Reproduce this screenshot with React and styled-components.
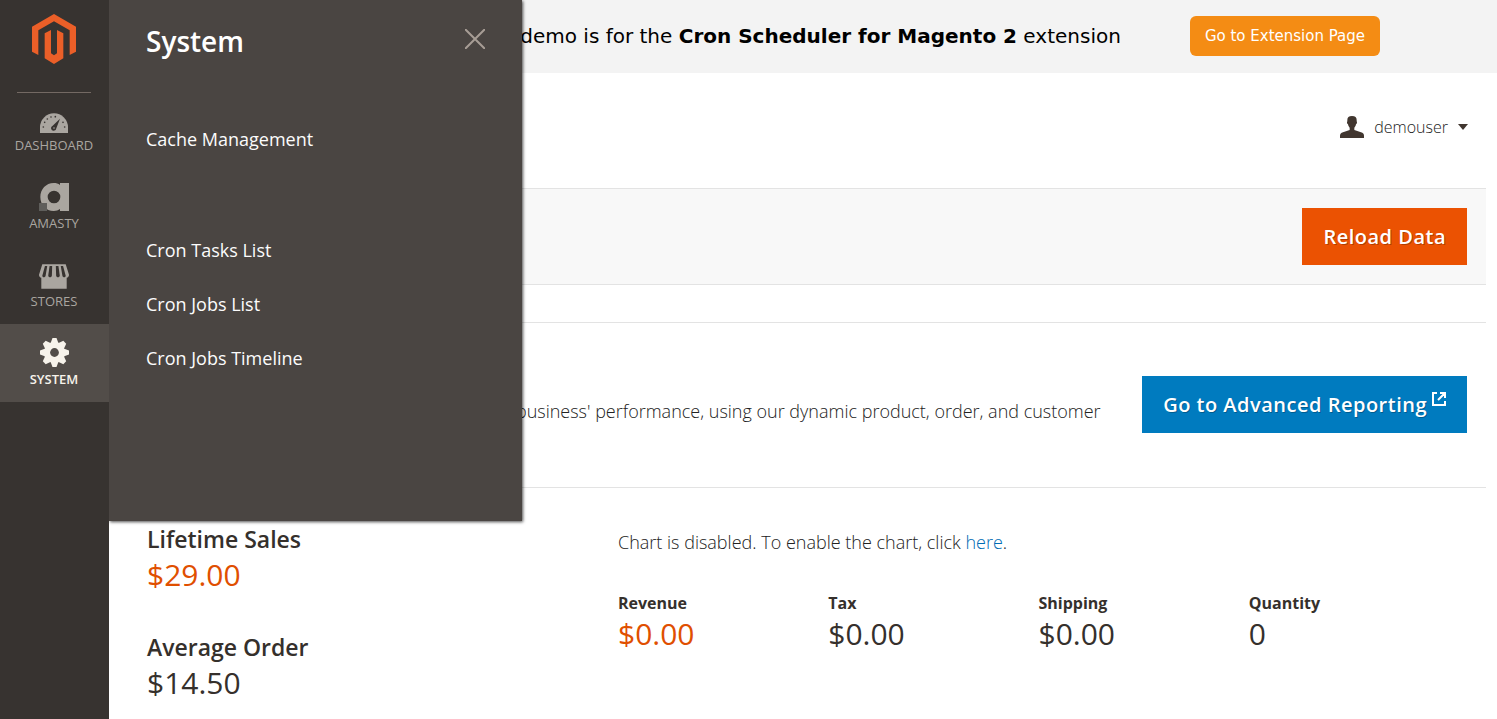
import React from 'react';
import styled, { createGlobalStyle } from 'styled-components';

const navItems = [
  { label: 'Dashboard', icon: <DashboardIcon /> },
  { label: 'Amasty', icon: <AmastyIcon /> },
  { label: 'Stores', icon: <StoresIcon /> },
  { label: 'System', icon: <SystemIcon />, active: true },
];

const menuGroups = [
  ['Cache Management'],
  ['Cron Tasks List', 'Cron Jobs List', 'Cron Jobs Timeline'],
];

const sales = [
  { label: 'Lifetime Sales', value: '$29.00', highlight: true },
  { label: 'Average Order', value: '$14.50' },
];

const totals = [
  { label: 'Revenue', value: '$0.00', highlight: true },
  { label: 'Tax', value: '$0.00' },
  { label: 'Shipping', value: '$0.00' },
  { label: 'Quantity', value: '0' },
];

function MagentoLogo() {
  return (
    <svg width="44" height="50" viewBox="96 40 132 150" fill="#eb5f28" aria-hidden="true">
      <path d="M162 40 228 78V153L209 163V89L162 62 115 89V163L96 153V78Z" />
      <path d="M134 98 153 88V158L162 164 171 158V88L190 98V173L162 190 134 173Z" />
    </svg>
  );
}

function DashboardIcon() {
  return (
    <svg width="28" height="20" viewBox="120 38 84 60" aria-hidden="true">
      <path fill="currentColor" d="M120 98V81a42 42 0 0 1 84 0v17Z" />
      <g fill="#373330">
        <path d="M180 55 169 84a8 8 0 1 1-11-8Z" />
        <circle cx="130" cy="80" r="2.5" />
        <circle cx="134" cy="66" r="2.5" />
        <circle cx="142" cy="56" r="2.5" />
        <circle cx="153" cy="50" r="2.5" />
        <circle cx="166" cy="49" r="2.5" />
        <circle cx="189" cy="66" r="2.5" />
        <circle cx="194" cy="80" r="2.5" />
      </g>
      <circle cx="162" cy="83" r="2.5" fill="currentColor" />
    </svg>
  );
}

function AmastyIcon() {
  return (
    <svg width="30" height="28" viewBox="117 252 90 84" aria-hidden="true">
      <path
        fill="currentColor"
        fillRule="evenodd"
        d="M161 252c8 0 14 2 19 6v-6h27v84h-27v-6c-5 4-11 6-19 6-23 0-40-19-40-42s17-42 40-42Zm1 23a19 19 0 1 0 0 38 19 19 0 0 0 0-38Z"
      />
      <path fill="#5f5e5b" d="M117 312h24v24h-24z" />
    </svg>
  );
}

function StoresIcon() {
  return (
    <svg width="30" height="25" viewBox="117 45 91 75" aria-hidden="true">
      <path fill="currentColor" d="M127 45h71l10 32c0 5-3 9-7 9v34h-77V86c-4 0-7-4-7-9Z" />
      <g fill="#373330">
        <path d="M135 51h7l-5 29c-1 6-10 6-10 0Z" />
        <path d="M149 51h8l-1 29c-1 6-10 6-11 0Z" />
        <path d="M168 51h8l4 29c-1 6-10 6-11 0Z" />
        <path d="M183 51h7l8 29c0 6-9 6-10 0Z" />
      </g>
    </svg>
  );
}

function SystemIcon() {
  return (
    <svg width="29" height="29" viewBox="-43 -43 86 86" aria-hidden="true">
      <g fill="currentColor">
        {[0, 45, 90, 135].map((angle) => (
          <path
            key={angle}
            transform={`rotate(${angle})`}
            d="M-6-43H6L12-27V27L6 43H-6L-12 27V-27Z"
          />
        ))}
        <circle r="31" />
      </g>
      <circle r="13" fill="#524d49" />
    </svg>
  );
}

function UserIcon() {
  return (
    <svg width="24" height="22" viewBox="0 0 72 66" fill="#41362f" aria-hidden="true">
      <path d="M36 0c10 0 14 4 14 12v4c2 2 1 8-2 9-1 5-3 8-5 10v7l20 7c6 2 9 5 9 10v7H0v-7c0-5 3-8 9-10l20-7v-7c-2-2-4-5-5-10-3-1-4-7-2-9v-4C22 4 26 0 36 0Z" />
    </svg>
  );
}

function ExternalIcon() {
  return (
    <svg width="14" height="14" viewBox="0 0 14 14" aria-hidden="true">
      <path
        d="M5 1H1V13H13V9M8 1H13V6M13 1 6 8"
        fill="none"
        stroke="#fff"
        strokeWidth="2"
      />
    </svg>
  );
}

const App = () => (
  <Page>
    <GlobalStyle />
    <Sidebar>
      <LogoLink href="#" aria-label="Magento">
        <MagentoLogo />
      </LogoLink>
      <Divider />
      <Nav>
        {navItems.map((item) => (
          <NavLink key={item.label} href="#" $active={item.active}>
            {item.icon}
            <span>{item.label}</span>
          </NavLink>
        ))}
      </Nav>
      <Submenu>
        <SubmenuHeader>
          <SubmenuTitle>System</SubmenuTitle>
          <CloseButton type="button" aria-label="Close">
            <svg width="20" height="20" viewBox="0 0 20 20" aria-hidden="true">
              <path d="M0 0 20 20M20 0 0 20" stroke="currentColor" strokeWidth="2" />
            </svg>
          </CloseButton>
        </SubmenuHeader>
        {menuGroups.map((group) => (
          <SubmenuGroup key={group[0]}>
            {group.map((label) => (
              <li key={label}>
                <SubmenuLink href="#">{label}</SubmenuLink>
              </li>
            ))}
          </SubmenuGroup>
        ))}
      </Submenu>
    </Sidebar>

    <Main>
      <Banner>
        <span>
          This demo is for the <b>Cron Scheduler for Magento 2</b> extension
        </span>
        <ExtensionLink href="#">Go to Extension Page</ExtensionLink>
      </Banner>
      <Content>
        <Header>
          <UserButton type="button">
            <UserIcon />
            demouser
            <Caret />
          </UserButton>
        </Header>
        <Actions>
          <ActionButton type="button">Reload Data</ActionButton>
        </Actions>
        <Reporting>
          <ReportingText>
            Gain new insights and take command of your business' performance, using our dynamic
            product, order, and customer reports tailored to your customer data.
          </ReportingText>
          <ActionLink href="#">
            Go to Advanced Reporting
            <ExternalIcon />
          </ActionLink>
        </Reporting>
        <Dashboard>
          <SalesList>
            {sales.map((item) => (
              <div key={item.label}>
                <SalesLabel>{item.label}</SalesLabel>
                <Amount $highlight={item.highlight}>{item.value}</Amount>
              </div>
            ))}
          </SalesList>
          <div>
            <ChartNote>
              Chart is disabled. To enable the chart, click <a href="#">here</a>.
            </ChartNote>
            <Totals>
              {totals.map((item) => (
                <div key={item.label}>
                  <TotalLabel>{item.label}</TotalLabel>
                  <Amount $highlight={item.highlight}>{item.value}</Amount>
                </div>
              ))}
            </Totals>
          </div>
        </Dashboard>
      </Content>
    </Main>
  </Page>
);

const GlobalStyle = createGlobalStyle`
  *, *::before, *::after {
    box-sizing: border-box;
  }

  body {
    margin: 0;
    background: #fff;
    color: #35302c;
    font-family: 'Open Sans', 'Noto Sans', sans-serif;
  }

  h2, p, ul, dl, dt, dd {
    margin: 0;
    padding: 0;
  }

  a {
    text-decoration: none;
  }

  svg {
    display: block;
    flex-shrink: 0;
  }
`;

const Page = styled.div`
  display: flex;
  min-height: 100vh;
`;

const Sidebar = styled.aside`
  position: relative;
  flex: 0 0 109px;
  background: #373330;
`;

const LogoLink = styled.a`
  display: flex;
  justify-content: center;
  height: 92px;
  padding: 14px 1px 0 0;
`;

const Divider = styled.hr`
  height: 1px;
  margin: 0 18px -3px 17px;
  border: 0;
  background: #736963;
`;

const Nav = styled.nav`
  display: flex;
  flex-direction: column;
`;

const NavLink = styled.a`
  display: flex;
  flex-direction: column;
  align-items: center;
  justify-content: flex-end;
  gap: 3px;
  height: 78px;
  padding: 0 1px 14px 0;
  background: ${(props) => (props.$active ? '#524d49' : 'transparent')};
  color: ${(props) => (props.$active ? '#f7f3eb' : '#aaa6a0')};
  font-size: 13px;
  font-weight: ${(props) => (props.$active ? 600 : 400)};
  line-height: 18px;
  text-transform: uppercase;
`;

const Submenu = styled.div`
  position: absolute;
  top: 0;
  left: 100%;
  z-index: 1;
  width: 413px;
  height: 521px;
  padding: 22px 37px;
  background: #4a4542;
  box-shadow: 1px 1px 3px rgba(0, 0, 0, 0.7);
  clip-path: inset(0 -8px -8px 0);
`;

const SubmenuHeader = styled.div`
  display: flex;
  justify-content: space-between;
  margin-bottom: 52px;
`;

const SubmenuTitle = styled.h2`
  color: #fff;
  font-size: 28px;
  font-weight: 600;
  line-height: 38px;
`;

const CloseButton = styled.button`
  align-self: flex-start;
  padding: 7px 0;
  border: 0;
  background: none;
  color: #a79d95;
  cursor: pointer;
`;

const SubmenuGroup = styled.ul`
  margin-bottom: 57px;
  list-style: none;
`;

const SubmenuLink = styled.a`
  display: block;
  color: #fcfcfc;
  font-size: 18px;
  line-height: 54px;
`;

const Main = styled.main`
  flex: 1;
  min-width: 0;
`;

const Banner = styled.div`
  display: flex;
  align-items: center;
  justify-content: flex-end;
  gap: 69px;
  height: 73px;
  padding: 0 117px 2px 0;
  background: #f3f3f3;
  color: #000;
  font-family: 'DejaVu Sans', sans-serif;
  font-size: 20px;
  white-space: nowrap;
`;

const ExtensionLink = styled.a`
  padding: 0 15px;
  border-radius: 6px;
  background: #f48c14;
  color: #fff;
  font-size: 15px;
  line-height: 40px;
`;

const Content = styled.div`
  margin-right: 11px;
`;

const Header = styled.header`
  display: flex;
  align-items: center;
  justify-content: flex-end;
  height: 115px;
  padding: 0 18px 8px 38px;
`;

const UserButton = styled.button`
  display: flex;
  align-items: center;
  gap: 10px;
  padding: 0;
  border: 0;
  background: none;
  color: #222;
  font-family: inherit;
  font-size: 16px;
  font-weight: 300;
  cursor: pointer;
`;

const Caret = styled.span`
  border: 5px solid transparent;
  border-top: 6px solid #41362f;
  border-bottom: 0;
`;

const Actions = styled.div`
  display: flex;
  justify-content: flex-end;
  padding: 19px;
  border: solid #e3e3e3;
  border-width: 1px 0;
  background: #f8f8f8;
`;

const ActionButton = styled.button`
  display: flex;
  gap: 5px;
  padding: 0 21px;
  border: 0;
  background: #eb5202;
  color: #fff;
  font-family: inherit;
  font-size: 20px;
  font-weight: 600;
  line-height: 57px;
  letter-spacing: 0.5px;
  text-shadow: 1px 1px 0 rgba(0, 0, 0, 0.25);
  white-space: nowrap;
  cursor: pointer;
`;

const ActionLink = styled(ActionButton).attrs({ as: 'a' })`
  background: #007bbf;

  svg {
    margin-top: 16px;
  }
`;

const Reporting = styled.section`
  display: flex;
  align-items: center;
  justify-content: space-between;
  gap: 28px;
  height: 166px;
  margin-top: 37px;
  padding: 0 19px 2px 38px;
  border: solid #e3e3e3;
  border-width: 1px 0;
`;

const ReportingText = styled.p`
  padding-top: 40px;
  color: #222;
  font-size: 18px;
  font-weight: 300;
  line-height: 26px;
`;

const Dashboard = styled.section`
  display: grid;
  grid-template-columns: 471fr 849fr;
  padding: 35px 19px 0 38px;
`;

const SalesList = styled.dl`
  display: grid;
  gap: 36px;
  align-content: start;
`;

const SalesLabel = styled.dt`
  font-size: 23px;
  font-weight: 600;
  line-height: 32px;
`;

const Amount = styled.dd`
  color: ${(props) => (props.$highlight ? '#e04f00' : '#35302c')};
  font-size: 30px;
  font-weight: 500;
  line-height: 40px;
`;

const ChartNote = styled.p`
  margin-bottom: 31px;
  color: #222;
  font-size: 18px;
  font-weight: 300;
  line-height: 38px;

  a {
    color: #006bb4;
  }
`;

const Totals = styled.dl`
  display: grid;
  grid-template-columns: repeat(4, 1fr);
  padding-right: 8px;
`;

const TotalLabel = styled.dt`
  font-size: 16px;
  font-weight: 700;
  line-height: 22px;
`;

export default App;
